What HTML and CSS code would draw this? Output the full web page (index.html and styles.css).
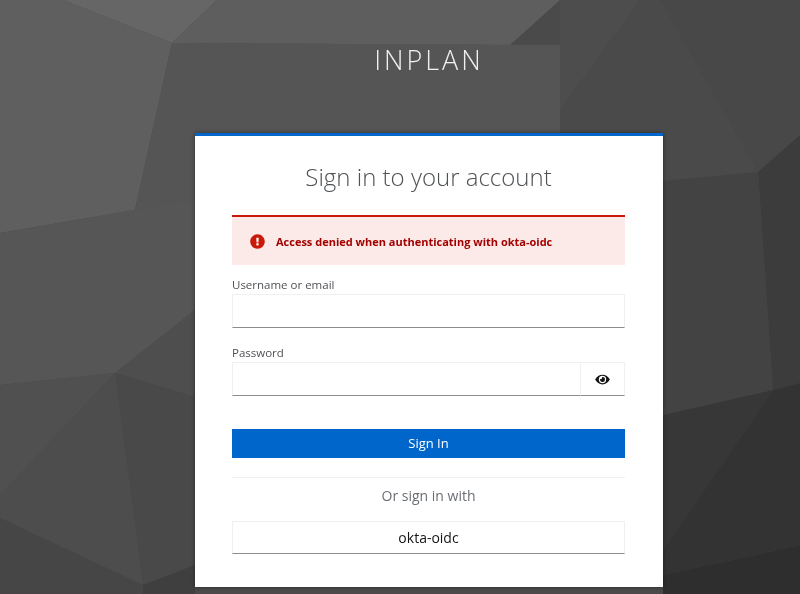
FILE: index.html
```html
<!DOCTYPE html>
<html lang="en">
<head>
<meta charset="utf-8">
<title>Sign in to INPLAN</title>
<link rel="stylesheet" href="styles.css">
</head>
<body>
<svg class="backdrop" viewBox="0 0 800 594" preserveAspectRatio="none" aria-hidden="true">
  <polygon class="p60" points="0,0 63,0 172,43 135,210 0,233"/>
  <polygon class="p66" points="63,0 217,0 172,43"/>
  <polygon class="p5e" points="217,0 560,0 510,45 172,43"/>
  <polygon class="p53" points="172,43 560,45 560,210 135,210"/>
  <polygon class="p4d" points="560,0 640,0 560,110"/>
  <polygon class="p4b" points="640,0 660,0 758,172 663,181 560,181 560,110"/>
  <polygon class="p48" points="660,0 800,0 800,135 758,172"/>
  <polygon class="p3c" points="758,172 800,135 800,383 773,390"/>
  <polygon class="p43" points="663,181 758,172 773,390 663,415"/>
  <polygon class="p37" points="663,415 773,390 663,550"/>
  <polygon class="p33" points="773,390 800,383 800,545 663,575 663,550"/>
  <polygon class="p2e" points="663,575 800,545 800,594 663,594"/>
  <polygon class="p57" points="0,233 135,210 195,200 195,310 115,373 0,385"/>
  <polygon class="p50" points="0,385 115,373 0,495"/>
  <polygon class="p4e" points="115,373 195,310 195,397"/>
  <polygon class="p4a" points="115,373 195,397 195,565 143,585"/>
  <polygon class="p4d" points="115,373 0,495 0,518 143,585"/>
  <polygon class="p47" points="0,518 143,585 143,594 0,594"/>
  <polygon class="p3f" points="143,585 195,565 195,594 143,594"/>
</svg>
<main class="page">
  <header class="brand">INPLAN</header>
  <section class="card">
    <h1 class="heading">Sign in to your account</h1>
    <div class="alert">
      <svg class="alert-icon" viewBox="0 0 512 512" aria-hidden="true"><path d="M504 256c0 136.997-111.043 248-248 248S8 392.997 8 256C8 119.083 119.043 8 256 8s248 111.083 248 248zm-248 50c-25.405 0-46 20.595-46 46s20.595 46 46 46 46-20.595 46-46-20.595-46-46-46zm-43.673-165.346l7.418 136c.347 6.364 5.609 11.346 11.982 11.346h48.546c6.373 0 11.635-4.982 11.982-11.346l7.418-136c.375-6.874-5.098-12.654-11.982-12.654h-63.383c-6.884 0-12.356 5.78-11.981 12.654z"/></svg>
      <span class="alert-text">Access denied when authenticating with okta-oidc</span>
    </div>
    <form class="form">
      <div class="field">
        <label class="label" for="username">Username or email</label>
        <input class="input" id="username" type="text">
      </div>
      <div class="field">
        <label class="label" for="password">Password</label>
        <div class="input-group">
          <input class="input input-grow" id="password" type="password">
          <button class="reveal" type="button" aria-label="Show password">
            <svg class="eye" viewBox="0 0 576 512" aria-hidden="true"><path d="M572.52 241.4C518.29 135.59 410.93 64 288 64S57.68 135.64 3.48 241.41a32.35 32.35 0 0 0 0 29.19C57.71 376.41 165.07 448 288 448s230.32-71.64 284.52-177.41a32.35 32.35 0 0 0 0-29.19zM288 400a144 144 0 1 1 144-144 143.93 143.93 0 0 1-144 144zm0-240a95.31 95.31 0 0 0-25.31 3.79 47.85 47.85 0 0 1-66.9 66.9A95.78 95.78 0 1 0 288 160z"/></svg>
          </button>
        </div>
      </div>
      <button class="submit" type="button">Sign In</button>
    </form>
    <div class="social">
      <p class="social-title">Or sign in with</p>
      <a class="provider" href="#">okta-oidc</a>
    </div>
  </section>
</main>
</body>
</html>
```
FILE: styles.css
```css
* { box-sizing: border-box; }
html, body { margin: 0; height: 100%; overflow: hidden; }
body {
  background: #4a4a4a;
  font-family: "Open Sans", "Liberation Sans", sans-serif;
  color: #151515;
}
.backdrop { position: fixed; inset: 0; width: 800px; height: 594px; z-index: -1; }
.p66 { fill: #666; } .p60 { fill: #5f5f5f; } .p5e { fill: #5e5e5e; } .p57 { fill: #565656; }
.p53 { fill: #555; } .p50 { fill: #505050; } .p4e { fill: #4e4e4e; } .p4d { fill: #4d4d4d; }
.p4b { fill: #4a4a4a; } .p4a { fill: #494949; } .p48 { fill: #484848; } .p47 { fill: #464646; }
.p43 { fill: #434343; } .p3f { fill: #3f3f3f; } .p3c { fill: #3c3c3c; } .p37 { fill: #373737; }
.p33 { fill: #333; } .p2e { fill: #2e2e2e; }

.page { width: 468px; margin-left: 195px; }
.brand {
  padding-top: 41px;
  height: 133px;
  text-align: center;
  font-size: 27px;
  line-height: 37px;
  font-weight: 300;
  letter-spacing: 3px;
  color: #f0f0f0;
}
.card {
  height: 454px;
  background: #fff;
  border-top: 3.5px solid #06c;
  padding: 0 38px 0 37px;
  box-shadow: 0 0 4px rgba(0, 0, 0, .45);
}
.heading {
  margin: 0;
  padding-top: 24px;
  height: 79px;
  text-align: center;
  font-size: 24px;
  line-height: 33px;
  font-weight: 300;
  color: #4f5255;
}
.alert {
  height: 50px;
  display: flex;
  align-items: center;
  gap: 11px;
  padding-left: 18px;
  background: #fbeae7;
  border-top: 2px solid #c9190b;
}
.alert-icon { width: 15px; height: 15px; fill: #c9190b; flex: none; }
.alert-text { font-size: 11px; font-weight: 700; color: #a30000; }
.form { display: flex; flex-direction: column; }
.field { display: flex; flex-direction: column; }
.field + .field { margin-top: 15px; }
.form { padding-top: 10px; }
.label { font-size: 11.5px; line-height: 19px; color: #4f5255; }
.input {
  height: 34px;
  width: 100%;
  padding: 0 8px;
  background: #fff;
  border: 1px solid #f0f0f0;
  border-bottom: 1.5px solid #8a8d90;
  outline: none;
}
.input-group { display: flex; }
.input-grow { flex: 1; min-width: 0; border-right: 0; }
.reveal {
  width: 45px;
  height: 34px;
  display: flex;
  align-items: center;
  justify-content: center;
  padding: 0;
  background: #fff;
  border: 1px solid #f0f0f0;
  border-bottom: 1.5px solid #8a8d90;
}
.eye { width: 15px; height: 13px; fill: #151515; }
.submit {
  margin-top: 33px;
  height: 29px;
  border: 0;
  background: #06c;
  color: #fff;
  font: 400 13px/1 "Open Sans", "Liberation Sans", sans-serif;
}
.social { margin-top: 19px; border-top: 1px solid #f0f0f0; padding-top: 8px; }
.social-title { margin: 0; text-align: center; font-size: 14px; line-height: 19px; color: #6a6e73; }
.provider {
  display: flex;
  align-items: center;
  justify-content: center;
  margin-top: 16px;
  height: 33px;
  background: #fff;
  border: 1px solid #f0f0f0;
  border-bottom: 1.5px solid #8a8d90;
  color: #151515;
  font-size: 14px;
  text-decoration: none;
}
```
